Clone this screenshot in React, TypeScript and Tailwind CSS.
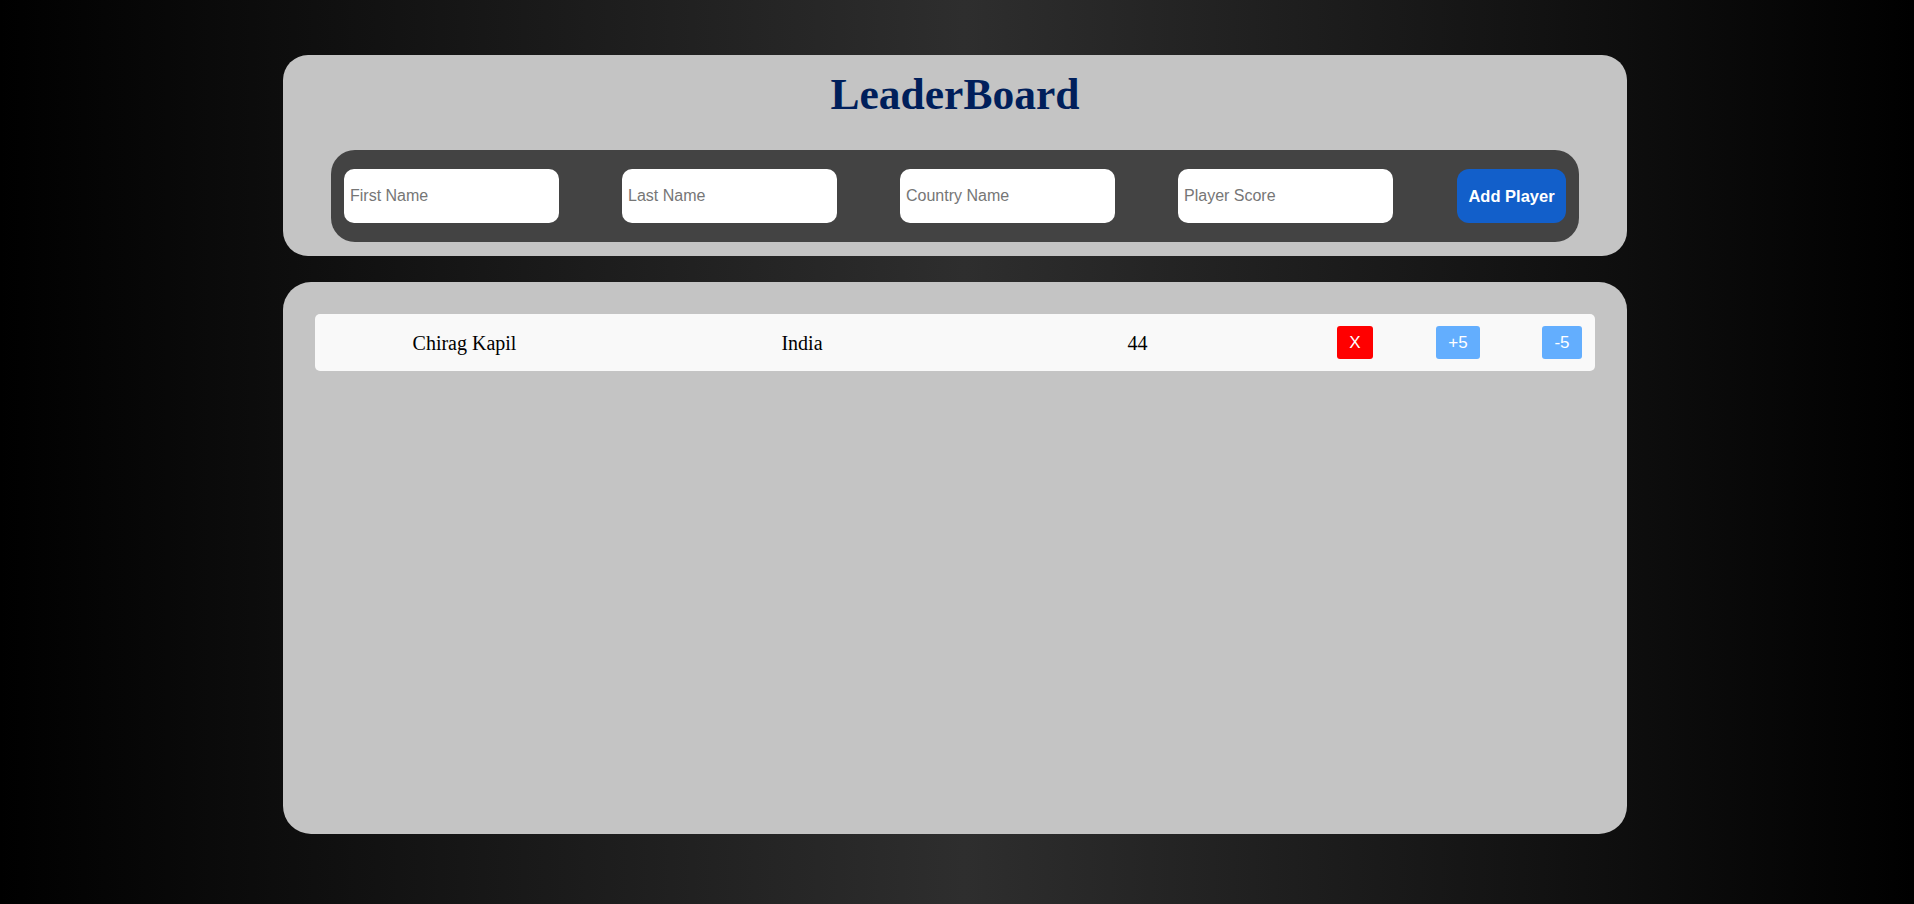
import React from "react";

export default function App() {
  const inputCls =
    "w-[215px] h-[54px] rounded-[10px] bg-white px-[6px] text-[16px] text-black outline-none border-0 placeholder:text-[#767676]";
  return (
    <div
      className="min-h-screen w-full pt-[55px] pb-[70px] bg-[linear-gradient(90deg,#000000_0%,#2e2e2e_50.4%,#000000_100%)]"
      style={{ fontFamily: '"Liberation Sans", Arial, sans-serif' }}
    >
      <div className="w-[1344px] ml-[283px] flex flex-col gap-[26px]">
        {/* Top card */}
        <div className="bg-[#c4c4c4] rounded-[25px] pt-[17px] pb-[14px] flex flex-col">
          <h1
            className="text-center text-[43.5px] leading-[44px] font-bold text-[#001f5b]"
            style={{ fontFamily: '"Liberation Serif", "Times New Roman", serif' }}
          >
            LeaderBoard
          </h1>
          <div className="mt-[34px] mx-[48px] h-[92px] bg-[#434343] rounded-[24px] px-[13px] flex items-center gap-[63px]">
            <input className={inputCls} placeholder="First Name" />
            <input className={inputCls} placeholder="Last Name" />
            <input className={inputCls} placeholder="Country Name" />
            <input className={inputCls} placeholder="Player Score" />
            <button className="w-[111px] h-[54px] rounded-[12px] bg-[#125fca] text-white font-bold text-[16.5px] ml-[1px]">
              Add Player
            </button>
          </div>
        </div>

        {/* Bottom card */}
        <div className="bg-[#c4c4c4] rounded-[28px] h-[552px] p-[32px]">
          <div
            className="h-[57px] bg-[#f9f9f9] rounded-[5px] flex items-center text-[20px] text-black"
            style={{ fontFamily: '"Liberation Serif", "Times New Roman", serif' }}
          >
            <div className="w-[299px] text-center">Chirag Kapil</div>
            <div className="w-[376px] text-center">India</div>
            <div className="w-[295px] text-center">44</div>
            <div
              className="ml-[52px] flex items-center gap-[63px] text-[17px] text-white"
              style={{ fontFamily: '"Liberation Sans", Arial, sans-serif' }}
            >
              <button className="h-[33px] w-[36px] rounded-[3px] bg-[#ff0000] flex items-center justify-center">
                X
              </button>
              <button className="h-[33px] w-[44px] rounded-[3px] bg-[#63aefe] flex items-center justify-center">
                +5
              </button>
              <button className="h-[33px] w-[40px] rounded-[3px] bg-[#63aefe] flex items-center justify-center ml-[-1px]">
                -5
              </button>
            </div>
          </div>
        </div>
      </div>
    </div>
  );
}
